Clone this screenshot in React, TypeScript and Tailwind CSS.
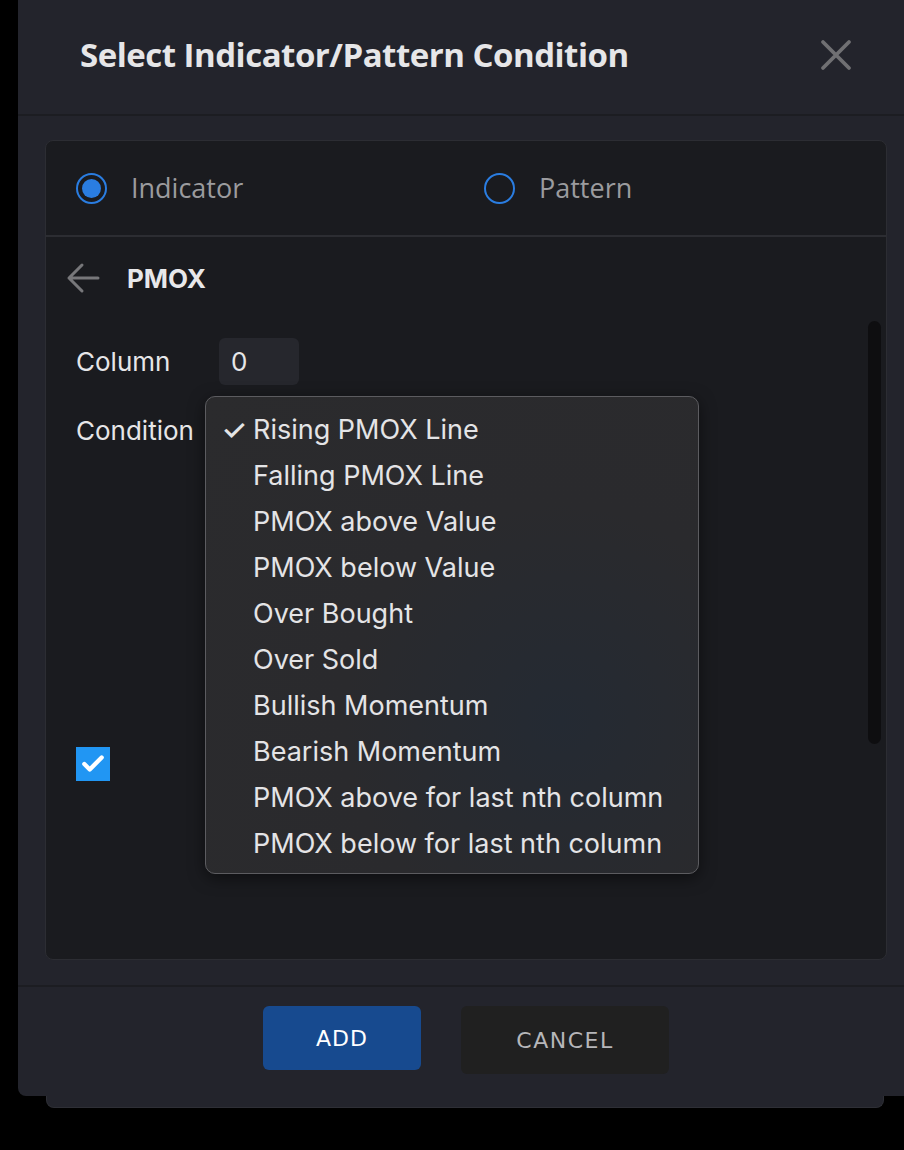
import { Check } from 'lucide-react'

const OPTIONS = [
  'Rising PMOX Line',
  'Falling PMOX Line',
  'PMOX above Value',
  'PMOX below Value',
  'Over Bought',
  'Over Sold',
  'Bullish Momentum',
  'Bearish Momentum',
  'PMOX above for last nth column',
  'PMOX below for last nth column',
]

const rounded = { fontFamily: '"Open Sans", Lato, sans-serif' }
const inter = { fontFamily: 'Inter, "Noto Sans", sans-serif' }

export default function App() {
  return (
    <div className="min-h-[1150px] w-[904px] bg-black overflow-hidden">
      {/* Modal */}
      <div className="ml-[18px] w-[920px] h-[1096px] bg-[#23242c] rounded-bl-lg flex flex-col">
        {/* Header */}
        <div className="h-[116px] shrink-0 flex items-center border-b-2 border-[#1c1d22] pl-[62px] pr-[86px] pb-[4px]">
          <h2 className="text-[33px] font-bold text-[#e6e6e8] tracking-[-0.5px]" style={rounded}>
            Select Indicator/Pattern Condition
          </h2>
          <svg className="ml-auto w-[32px] h-[32px]" viewBox="0 0 32 32" fill="none" stroke="#707073" strokeWidth={3.8} strokeLinecap="round">
            <path d="M3 3l26 26M29 3L3 29" />
          </svg>
        </div>

        {/* Card */}
        <div className="relative mt-[24px] ml-[27px] w-[842px] h-[820px] bg-[#1a1b1f] border border-[#2c2d33] rounded-lg flex flex-col">
          {/* Radio row */}
          <div className="h-[96px] shrink-0 flex items-center border-b-2 border-[#2c2d32]">
            <div className="flex items-center pl-[30px] w-[438px]">
              <span className="w-[31px] h-[31px] rounded-full border-2 border-[#2a7de1] flex items-center justify-center">
                <span className="w-[19px] h-[19px] rounded-full bg-[#2a7de1]" />
              </span>
              <span className="ml-[24px] text-[27px] text-[#9b9b9e]" style={rounded}>Indicator</span>
            </div>
            <div className="flex items-center">
              <span className="w-[31px] h-[31px] rounded-full border-2 border-[#2a7de1]" />
              <span className="ml-[24px] text-[27px] text-[#9b9b9e]" style={rounded}>Pattern</span>
            </div>
          </div>

          {/* PMOX header */}
          <div className="h-[82px] shrink-0 flex items-center pl-[20px]">
            <svg className="w-[34px] h-[32px]" viewBox="0 0 34 32" fill="none" stroke="#77777a" strokeWidth={3} strokeLinecap="round" strokeLinejoin="round">
              <path d="M32 16H3M16 3L3 16l13 13" />
            </svg>
            <span className="ml-[27px] text-[26px] font-bold text-[#e8e8ea]" style={inter}>PMOX</span>
          </div>

          {/* Fields */}
          <div className="flex flex-col pl-[30px]" style={inter}>
            <div className="flex items-center mt-[19px]">
              <span className="w-[143px] text-[26px] text-[#e6e6e8]">Column</span>
              <div className="w-[80px] h-[47px] rounded-md bg-[#26272d] flex items-center pl-[12px] text-[26px] text-[#e6e6e8]">0</div>
            </div>
            <div className="flex items-center mt-[25px] h-[40px]">
              <span className="text-[26px] text-[#e6e6e8]">Condition</span>
            </div>
            <div className="mt-[297px]">
              <span className="w-[34px] h-[34px] bg-[#2196f3] flex items-center justify-center">
                <Check className="w-[26px] h-[26px] text-white" strokeWidth={4} />
              </span>
            </div>
          </div>

          {/* Scrollbar */}
          <div className="absolute left-[822px] top-[180px] w-[13px] h-[423px] rounded-full bg-[#0e0e10]" />

          {/* Dropdown menu */}
          <div
            className="absolute left-[159px] top-[255px] w-[494px] h-[478px] rounded-[10px] border border-[#5c5c60] shadow-[0_4px_16px_rgba(0,0,0,0.5)] bg-[radial-gradient(circle_at_72%_68%,#242a33_0%,#2a2a2d_45%,#2b2b2d_100%)] pt-[10px]"
            style={inter}
          >
            {OPTIONS.map((o, i) => (
              <div key={o} className="h-[46px] flex items-center text-[27px] text-[#e4e4e6]">
                <span className="w-[47px] text-right pr-[6px] text-[29px] font-medium">{i === 0 ? '✓' : ''}</span>
                {o}
              </div>
            ))}
          </div>
        </div>

        {/* Footer */}
        <div className="mt-[25px] border-t-2 border-[#1c1d22] flex-1 flex items-start pl-[245px] pt-[19px] gap-[40px]">
          <button className="w-[158px] h-[64px] rounded-md bg-[#174a8f] text-white text-[22px] tracking-[1px]" style={{ fontFamily: '"DejaVu Sans", sans-serif' }}>
            ADD
          </button>
          <button className="w-[208px] h-[68px] rounded-md bg-[#202020] text-[#b6b6b9] text-[22px] tracking-[1.5px]" style={{ fontFamily: '"DejaVu Sans", sans-serif' }}>
            CANCEL
          </button>
        </div>
      </div>
      {/* Stacked layer beneath */}
      <div className="ml-[46px] w-[838px] h-[12px] bg-[#23242c] border-x border-b border-[#2e2f36] rounded-b-lg" />
    </div>
  )
}
